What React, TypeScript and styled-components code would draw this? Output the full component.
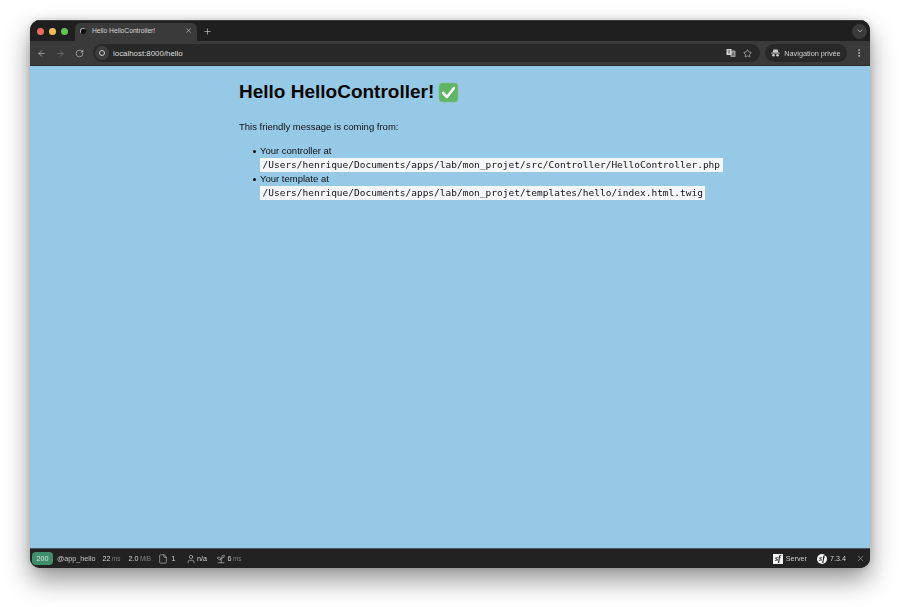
import React from "react";
import styled, { createGlobalStyle } from "styled-components";
import { ArrowLeft, ArrowRight, RotateCw, X, Plus, ChevronDown, Star, EllipsisVertical, File, User, Sprout } from "lucide-react";

const Global = createGlobalStyle`
  html, body { margin: 0; padding: 0; background: #fff; }
  body { width: 900px; height: 607px; overflow: hidden; font-family: "Liberation Sans", Arial, sans-serif; }
`;
const Stage = styled.div`
  width: 900px; height: 607px; padding: 20px 30px 39px; box-sizing: border-box;
`;
const Win = styled.div`
  width: 840px; height: 548px; border-radius: 10px; overflow: hidden; display: flex; flex-direction: column;
  background: #202124;
  box-shadow: 0 12px 26px rgba(0,0,0,.42), 0 0 7px rgba(0,0,0,.16);
  filter: blur(.3px);
`;
const TabBar = styled.div`
  height: 21px; flex: none; background: #1f1f20; display: flex; align-items: flex-end; padding: 0 3px 0 7px;
  border-top: 1px solid #3a3a3a; box-sizing: border-box;
`;
const Lights = styled.div` display: flex; gap: 5px; align-self: center; margin-right: 7px; `;
const Light = styled.span<{ $c: string }>` width: 7px; height: 7px; border-radius: 50%; background: ${p => p.$c}; `;
const Tab = styled.div`
  width: 122px; height: 18px; background: #3a3a3b; border-radius: 6px 6px 0 0; display: flex; align-items: center;
  padding: 0 5px 3px 5px; box-sizing: border-box; color: #d5d5d5; font-size: 6.7px; gap: 6px;
`;
const TabTitle = styled.span` flex: 1; white-space: nowrap; `;
const Fav = styled.span` width: 6px; height: 6px; border-radius: 50%; background: radial-gradient(circle at 60% 60%, #111 55%, #bbb 60%); `;
const NewTab = styled.span` display: flex; align-self: center; margin-left: 6px; color: #c8c8c8; `;
const Chev = styled.span`
  margin-left: auto; align-self: center; width: 15px; height: 15px; border-radius: 50%; background: #3a3a3b;
  display: flex; align-items: center; justify-content: center; color: #c8c8c8;
`;
const ToolBar = styled.div`
  height: 24px; flex: none; background: #3a3a3b; display: flex; align-items: center; padding: 0 7px; color: #c4c4c4;
  border-bottom: 1px solid #2a2a2a; box-sizing: content-box;
`;
const NavBtn = styled.span<{ $dim?: boolean }>` display: flex; width: 9px; margin-right: 10px; color: ${p => p.$dim ? "#7a7a7a" : "#c4c4c4"}; `;
const Omni = styled.div`
  width: 667px; height: 18px; border-radius: 9px; background: #282829; display: flex; align-items: center;
  margin-left: -1px; padding: 0 8px 0 0; box-sizing: border-box;
`;
const Info = styled.span`
  width: 14px; height: 14px; border-radius: 50%; background: #3d3d3e; margin: 0 4px 0 2px;
  display: flex; align-items: center; justify-content: center;
`;
const InfoDot = styled.span` width: 6px; height: 6px; border-radius: 50%; border: 1px solid #c8c8c8; box-sizing: border-box; `;
const Url = styled.span` color: #dcdcdc; font-size: 7.9px; flex: 1; `;
const OmniIcons = styled.span` display: flex; gap: 7px; align-items: center; color: #c4c4c4; `;
const Private = styled.div`
  margin-left: 5px; width: 82px; height: 18px; border-radius: 9px; background: #282829; display: flex; align-items: center;
  justify-content: center; gap: 4px; color: #d0d0d0; font-size: 7.3px; white-space: nowrap;
`;
const More = styled.span` margin-left: auto; margin-right: -1px; display: flex; color: #c4c4c4; `;
const Page = styled.main`
  flex: 1; background: #95c9e6; padding: 13px 0 0 209px; color: #000; min-height: 0;
`;
const Title = styled.h1`
  margin: 0; font-size: 19px; line-height: 26px; font-weight: 700; display: flex; align-items: center; gap: 4px; color: #050505;
`;
const Para = styled.p` margin: 15px 0 0; font-size: 9.5px; line-height: 14px; color: #111; `;
const List = styled.ul` margin: 10px 0 0; padding: 0 0 0 21px; font-size: 9.5px; line-height: 14px; color: #111; list-style: none; `;
const Item = styled.li`
  position: relative;
  &::before {
    content: ""; position: absolute; left: -7.5px; top: 5.5px; width: 3px; height: 3px; border-radius: 50%; background: #111;
  }
`;
const Code = styled.code`
  display: block; width: fit-content; background: #f4f7f9; font-family: "DejaVu Sans Mono", monospace; font-size: 9.5px; line-height: 14px; padding: 0 2.5px; color: #111; white-space: nowrap;
`;
const Bar = styled.footer`
  height: 19px; flex: none; background: #222; border-top: 1px solid #4a5560; display: flex; align-items: center; padding: 0 4px 0 2px; color: #b5b5b5; font-size: 7.2px; box-sizing: content-box;
`;
const Status = styled.span`
  width: 21px; height: 13px; border-radius: 4px; background: #3f8f6d; color: #cfe5da; display: flex; align-items: center; justify-content: center; margin-right: 4px;
`;
const Stat = styled.span<{ $ml?: number }>` display: inline-flex; align-items: center; gap: 1.5px; margin-left: ${p => p.$ml ?? 0}px; color: #d2d2d2; white-space: nowrap; `;
const Unit = styled.span` color: #7f7f7f; font-size: 6.4px; `;
const Route = styled.span` color: #c8c8c8; white-space: nowrap; `;
const Right = styled.div` margin-left: auto; display: flex; align-items: center; color: #d0d0d0; `;
const SfSquare = styled.span`
  width: 10px; height: 10px; background: #f2f2f2; color: #111; display: flex; align-items: center; justify-content: center; font: italic 700 8px "Liberation Serif", serif; margin-right: 3px;
`;
const SfRound = styled(SfSquare)` border-radius: 50%; margin-left: 10px; `;
const Close = styled.span` display: flex; margin-left: 10px; margin-right: 1px; color: #c4c4c4; `;

function CheckEmoji() {
  return (
    <svg width="21" height="21" viewBox="0 0 21 21" aria-hidden="true">
      <rect x="1" y="1" width="19" height="19" rx="3.5" fill="#5fb562" stroke="#8fbf8f" strokeWidth=".6" />
      <path d="M5 11l4 4 7-9" fill="none" stroke="#fff" strokeWidth="2.6" strokeLinecap="round" strokeLinejoin="round" />
    </svg>
  );
}

function TranslateIcon() {
  return (
    <svg width="10" height="10" viewBox="0 0 20 20" aria-hidden="true">
      <rect x="9" y="5" width="10" height="13" rx="1" fill="#9a9a9a" />
      <rect x="1" y="2" width="10" height="12" rx="1" fill="#d8d8d8" />
      <path d="M3 6h6M6 4.5V6M4 11c2-1 3-3 3.5-5M4.5 7.5c.6 1.6 2 3 3.6 3.6" fill="none" stroke="#333" strokeWidth="1" />
      <path d="M12 15l2-6 2 6M12.8 13h2.4" fill="none" stroke="#333" strokeWidth="1" />
    </svg>
  );
}

export default function App() {
  return (
    <Stage>
      <Global />
      <Win>
        <TabBar>
          <Lights>
            <Light $c="#ec6a5e" /><Light $c="#f4bf4f" /><Light $c="#61c554" />
          </Lights>
          <Tab>
            <Fav />
            <TabTitle>Hello HelloController!</TabTitle>
            <X size={7} strokeWidth={2} />
          </Tab>
          <NewTab><Plus size={9} strokeWidth={1.8} /></NewTab>
          <Chev><ChevronDown size={8} strokeWidth={2.2} /></Chev>
        </TabBar>
        <ToolBar>
          <NavBtn><ArrowLeft size={9} strokeWidth={1.8} /></NavBtn>
          <NavBtn $dim><ArrowRight size={9} strokeWidth={1.8} /></NavBtn>
          <NavBtn><RotateCw size={9} strokeWidth={1.8} /></NavBtn>
          <Omni>
            <Info><InfoDot /></Info>
            <Url>localhost:8000/hello</Url>
            <OmniIcons>
              <TranslateIcon />
              <Star size={9} strokeWidth={1.8} />
            </OmniIcons>
          </Omni>
          <Private>
            <svg width="9" height="8" viewBox="0 0 18 16" aria-hidden="true">
              <path d="M5 1h8l2 6H3zM0 7.5h18v1.6H0z" fill="#d0d0d0" />
              <circle cx="5" cy="12.5" r="2.6" fill="#d0d0d0" /><circle cx="13" cy="12.5" r="2.6" fill="#d0d0d0" />
            </svg>
            Navigation privée
          </Private>
          <More><EllipsisVertical size={10} strokeWidth={2.2} /></More>
        </ToolBar>
        <Page>
          <Title>Hello HelloController! <CheckEmoji /></Title>
          <Para>This friendly message is coming from:</Para>
          <List>
            <Item>Your controller at<Code>/Users/henrique/Documents/apps/lab/mon_projet/src/Controller/HelloController.php</Code></Item>
            <Item>Your template at<Code>/Users/henrique/Documents/apps/lab/mon_projet/templates/hello/index.html.twig</Code></Item>
          </List>
        </Page>
        <Bar>
          <Status>200</Status>
          <Route>@app_hello</Route>
          <Stat $ml={7}>22<Unit>ms</Unit></Stat>
          <Stat $ml={8}>2.0<Unit>MiB</Unit></Stat>
          <Stat $ml={7}><File size={10} strokeWidth={1.4} /> <span>&nbsp;1</span></Stat>
          <Stat $ml={10}><User size={10} strokeWidth={1.4} /> n/a</Stat>
          <Stat $ml={9}><Sprout size={10} strokeWidth={1.4} /> 6<Unit>ms</Unit></Stat>
          <Right>
            <SfSquare>sf</SfSquare>Server
            <SfRound>sf</SfRound>7.3.4
            <Close><X size={9} strokeWidth={1.4} /></Close>
          </Right>
        </Bar>
      </Win>
    </Stage>
  );
}
